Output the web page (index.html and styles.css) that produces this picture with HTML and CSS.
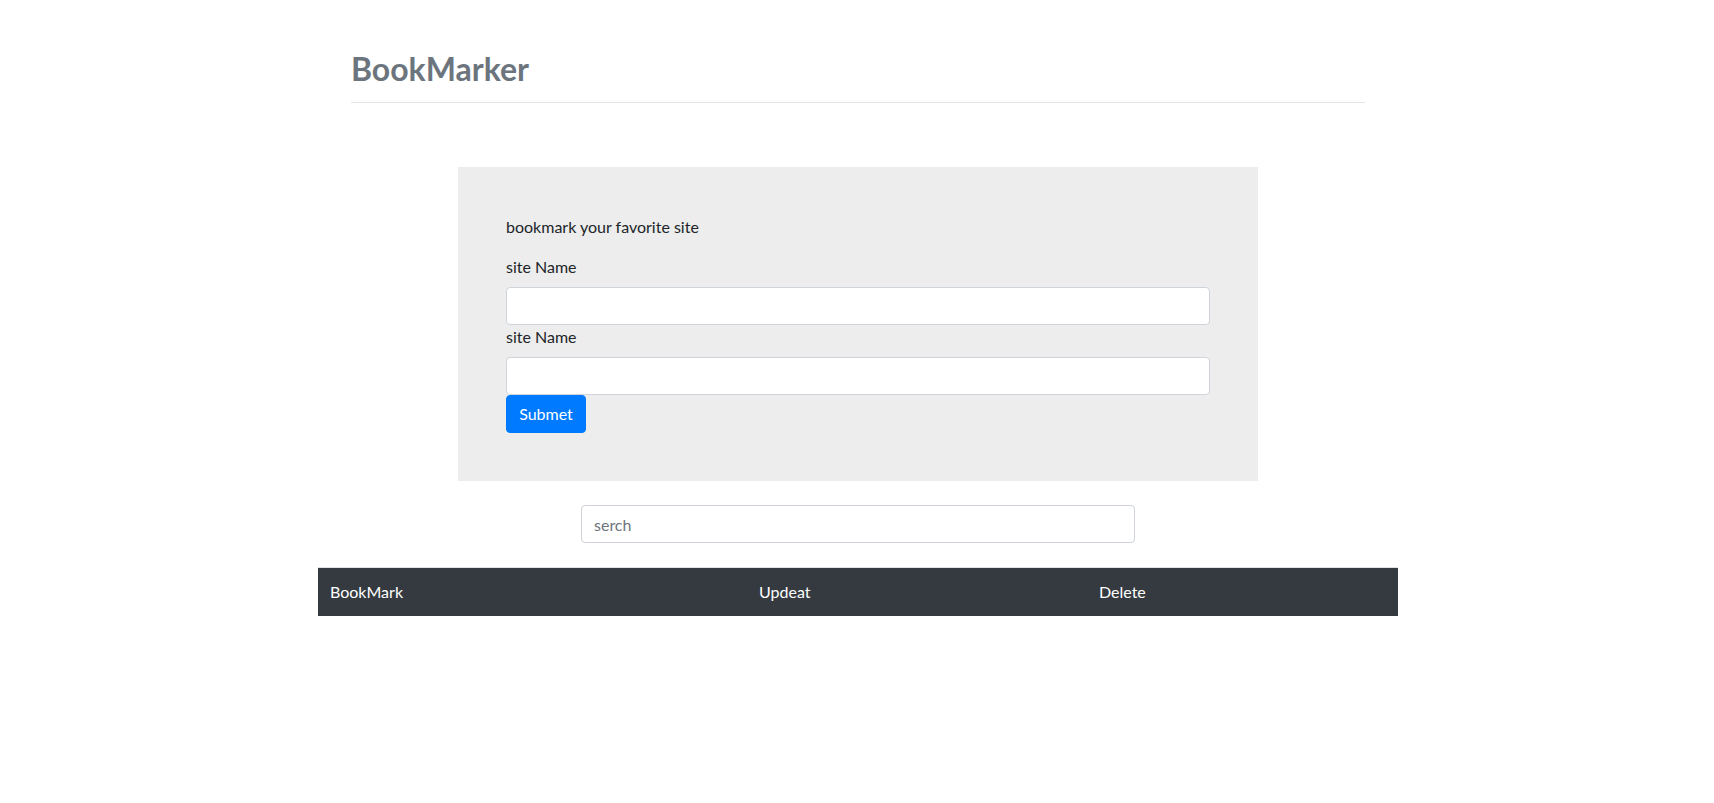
FILE: index.html
```html
<!DOCTYPE html>
<html lang="en">
<head>
<meta charset="utf-8">
<title>BookMarker</title>
<link rel="stylesheet" href="styles.css">
</head>
<body>
  <header class="page-header">
    <h1 class="brand">BookMarker</h1>
  </header>

  <section class="panel">
    <p class="panel-lead">bookmark your favorite site</p>
    <form class="panel-form">
      <label class="field-label" for="siteName">site Name</label>
      <input class="field" id="siteName" type="text">
      <label class="field-label" for="siteUrl">site Name</label>
      <input class="field" id="siteUrl" type="text">
      <button class="btn-submit" type="button">Submet</button>
    </form>
  </section>

  <div class="search-wrap">
    <input class="field search" type="text" placeholder="serch">
  </div>

  <table class="bm-table">
    <thead>
      <tr>
        <th class="col-name">BookMark</th>
        <th class="col-update">Updeat</th>
        <th class="col-delete">Delete</th>
      </tr>
    </thead>
    <tbody></tbody>
  </table>
</body>
</html>
```

FILE: styles.css
```css
* { box-sizing: border-box; }

body {
  margin: 0;
  padding-left: 2px;
  font-family: Lato, "Open Sans", "Liberation Sans", sans-serif;
  font-size: 16px;
  line-height: 24px;
  color: #212529;
  background: #fff;
}

.page-header {
  width: 1014px;
  margin: 0 auto;
  padding-top: 50px;
  padding-bottom: 14px;
  border-bottom: 1px solid #e3e4e6;
}

.brand {
  margin: 0;
  font-size: 32px;
  line-height: 1.2;
  font-weight: 700;
  color: #6c757d;
}

.panel {
  width: 800px;
  margin: 64px auto 0;
  padding: 48px;
  background: #ededed;
}

.panel-lead {
  margin: 0 0 16px;
}

.panel-form {
  display: flex;
  flex-direction: column;
  align-items: flex-start;
}

.field-label {
  display: block;
  margin-bottom: 8px;
}

.field {
  display: block;
  width: 100%;
  height: 38px;
  padding: 6px 12px;
  font: inherit;
  color: #495057;
  background: #fff;
  border: 1px solid #ced4da;
  border-radius: 4px;
  outline: none;
}

.field::placeholder { color: #6c757d; }

.btn-submit {
  height: 38px;
  width: 80px;
  padding: 6px 12px;
  font: inherit;
  color: #fff;
  background: #007bff;
  border: 1px solid #007bff;
  border-radius: 4px;
}

.search-wrap {
  width: 554px;
  margin: 24px auto 0;
}

.bm-table {
  width: 1080px;
  margin: 24px auto 0;
  border-collapse: collapse;
  border-top: 1px solid #dee2e6;
}

.bm-table th {
  background: #343a40;
  color: #fff;
  font-weight: 400;
  text-align: left;
  padding: 12px;
  line-height: 24px;
}

.col-name { width: 429px; }
.col-update { width: 340px; }
.col-delete { width: 311px; }
```
